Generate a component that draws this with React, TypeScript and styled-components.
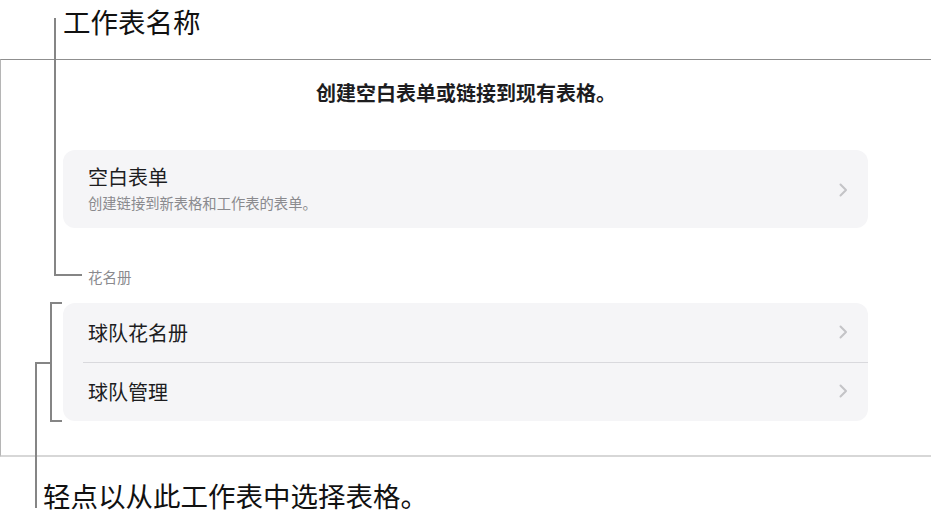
import React from "react";
import styled, { createGlobalStyle } from "styled-components";

const GlobalStyle = createGlobalStyle`
  html, body {
    margin: 0;
    padding: 0;
    background: #fff;
  }
  body {
    font-family: "Noto Sans CJK SC", "Noto Sans", sans-serif;
    color: #1d1d1f;
  }
`;

interface Row {
  title: string;
  subtitle?: string;
}

const blankRows: Row[] = [
  { title: "空白表单", subtitle: "创建链接到新表格和工作表的表单。" },
];

const rosterRows: Row[] = [{ title: "球队花名册" }, { title: "球队管理" }];

const Chevron = () => (
  <svg width="9" height="14" viewBox="0 0 9 14">
    <polyline
      points="1.5,1.5 7,7 1.5,12.5"
      fill="none"
      stroke="#c4c4c7"
      strokeWidth="2"
      strokeLinecap="round"
      strokeLinejoin="round"
    />
  </svg>
);

const Leaders = () => (
  <LeaderLayer width="931" height="519" viewBox="0 0 931 519">
    <g fill="none" stroke="#858585" strokeWidth="2">
      {/* sheet name callout */}
      <polyline points="55,18 55,275 82,275" />
      {/* table bracket */}
      <polyline points="62,303 51,303 51,421 62,421" />
      <polyline points="51,363 36,363 36,508" />
    </g>
  </LeaderLayer>
);

const App = () => {
  return (
    <Page>
      <GlobalStyle />
      <Caption top>工作表名称</Caption>
      <Panel>
        <Heading>创建空白表单或链接到现有表格。</Heading>
        <Card>
          {blankRows.map((row) => (
            <CardRow key={row.title} tall>
              <div className="row-text">
                <RowTitle>{row.title}</RowTitle>
                {row.subtitle && <RowSub>{row.subtitle}</RowSub>}
              </div>
              <Chevron />
            </CardRow>
          ))}
        </Card>
        <SectionLabel>花名册</SectionLabel>
        <Card>
          {rosterRows.map((row, i) => (
            <CardRow key={row.title} divider={i > 0}>
              <div className="row-text">
                <RowTitle>{row.title}</RowTitle>
              </div>
              <Chevron />
            </CardRow>
          ))}
        </Card>
      </Panel>
      <Caption>轻点以从此工作表中选择表格。</Caption>
      <Leaders />
    </Page>
  );
};

const Page = styled.div`
  position: relative;
  width: 931px;
  height: 519px;
  overflow: hidden;
`;

const LeaderLayer = styled.svg`
  position: absolute;
  left: 0;
  top: 0;
  pointer-events: none;
`;

const Caption = styled.div<{ top?: boolean }>`
  font-size: 27.5px;
  line-height: 36px;
  color: #111;
  padding-left: ${(props) => (props.top ? "63px" : "43px")};
  height: ${(props) => (props.top ? "56px" : "36px")};
  padding-top: ${(props) => (props.top ? "3px" : "20px")};
`;

const Panel = styled.div`
  border-top: 1px solid #8f8f8f;
  border-left: 1px solid #b5b5b5;
  border-bottom: 2px solid #d7d7d7;
  padding: 20px 62px 34px 62px;
  display: flex;
  flex-direction: column;
`;

const Heading = styled.div`
  text-align: center;
  font-size: 20px;
  line-height: 26px;
  font-weight: 700;
  color: #1d1d1f;
  margin-left: -62px;
  margin-right: -62px;
  margin-bottom: 44px;
`;

const Card = styled.div`
  width: 805px;
  background: #f5f5f7;
  border-radius: 12px;
  display: flex;
  flex-direction: column;
`;

const CardRow = styled.div<{ tall?: boolean; divider?: boolean }>`
  position: relative;
  height: ${(props) => (props.tall ? "78px" : "59px")};
  display: flex;
  align-items: center;
  justify-content: space-between;
  padding: 0 20px 0 25px;
  box-sizing: border-box;
  ${(props) =>
    props.divider &&
    `
    &::before {
      content: "";
      position: absolute;
      top: 0;
      left: 20px;
      right: 0;
      height: 1px;
      background: #d9d9dd;
    }
  `}
  .row-text {
    display: flex;
    flex-direction: column;
    margin-top: ${(props) => (props.tall ? "-2px" : "0")};
  }
  svg {
    margin-top: ${(props) => (props.tall ? "2px" : "-1px")};
  }
`;

const RowTitle = styled.div`
  font-size: 20px;
  line-height: 26px;
  color: #1d1d1f;
`;

const RowSub = styled.div`
  font-size: 14.3px;
  line-height: 20px;
  color: #8a8a8e;
  margin-top: 3px;
`;

const SectionLabel = styled.div`
  font-size: 14.5px;
  line-height: 20px;
  color: #8a8a8e;
  padding-left: 25px;
  margin-top: 39px;
  margin-bottom: 16px;
`;

export default App;
